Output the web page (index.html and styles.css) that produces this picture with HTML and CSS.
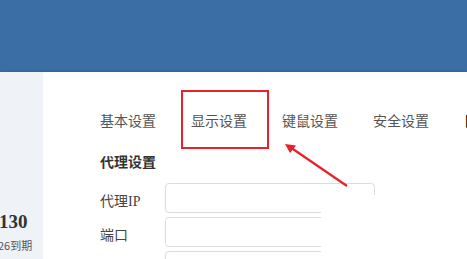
FILE: index.html
```html
<!DOCTYPE html>
<html lang="zh-CN">
<head>
<meta charset="utf-8">
<link rel="stylesheet" href="styles.css">
</head>
<body>
<div class="page">
  <header class="header"></header>
  <div class="content">
    <aside class="sidebar">
      <div class="stat-num">130</div>
      <div class="stat-date">26到期</div>
    </aside>
    <main class="main">
      <nav class="tabs">
        <span class="tab">基本设置</span>
        <span class="tab">显示设置</span>
        <span class="tab">键鼠设置</span>
        <span class="tab">安全设置</span>
        <span class="tab tab-dark">日志设置</span>
      </nav>
      <div class="section-title">代理设置</div>
      <div class="form">
        <div class="row"><label class="label">代理IP</label><div class="input"></div></div>
        <div class="row"><label class="label">端口</label><div class="input"></div></div>
        <div class="row"><label class="label"></label><div class="input"></div></div>
      </div>
    </main>
  </div>
  <div class="mask"></div>
  <div class="highlight"></div>
  <svg class="arrow" width="467" height="259" viewBox="0 0 467 259">
    <line x1="347" y1="186" x2="290" y2="147" stroke="#e8212b" stroke-width="2.2"/>
    <polygon points="285,144 296,145.5 290,153" fill="#e8212b"/>
  </svg>
</div>
</body>
</html>
```
FILE: styles.css
```css
html, body {
  margin: 0;
  padding: 0;
  background: #fff;
  overflow: hidden;
}
.page {
  position: relative;
  width: 467px;
  height: 259px;
  overflow: hidden;
  font-family: "Liberation Serif", "Noto Sans CJK SC", serif;
}
.header {
  height: 72px;
  background: #3b6ea5;
  box-shadow: inset 0 -2px 1px rgba(0, 0, 0, 0.06);
}
.content {
  display: flex;
  height: 187px;
}
.sidebar {
  width: 43px;
  flex: none;
  background: #eff2f7;
  padding-top: 139px;
  box-sizing: border-box;
  overflow: hidden;
}
.stat-num {
  margin-left: -1px;
  font-weight: bold;
  font-size: 19px;
  line-height: 22px;
  color: #333;
  white-space: nowrap;
}
.stat-date {
  margin-left: -2px;
  margin-top: 5px;
  font-size: 11px;
  line-height: 14px;
  color: #555;
  white-space: nowrap;
  font-family: "Noto Sans CJK SC", sans-serif;
}
.main {
  flex: 1;
  padding-left: 57px;
  padding-top: 40px;
  min-width: 0;
}
.tabs {
  display: flex;
  gap: 35px;
  white-space: nowrap;
  font-size: 14px;
  line-height: 20px;
  color: #555;
}
.tab {
  flex: none;
}
.tab-dark {
  color: #000;
  font-weight: bold;
}
.section-title {
  margin-top: 21px;
  font-size: 14px;
  line-height: 20px;
  font-weight: bold;
  color: #333;
}
.form {
  margin-top: 10px;
  display: flex;
  flex-direction: column;
  gap: 4px;
}
.row {
  display: flex;
  align-items: center;
}
.label {
  width: 65px;
  flex: none;
  font-size: 14px;
  color: #444;
  padding-top: 3px;
}
.input {
  width: 210px;
  height: 30px;
  box-sizing: border-box;
  border: 1px solid #dcdcdc;
  border-radius: 4px;
  flex: none;
}
.mask {
  position: absolute;
  left: 321px;
  top: 195px;
  right: 0;
  bottom: 0;
  background: #fff;
}
.highlight {
  position: absolute;
  left: 181px;
  top: 90px;
  width: 88px;
  height: 59px;
  box-sizing: border-box;
  border: 2px solid #e8212b;
}
.arrow {
  position: absolute;
  left: 0;
  top: 0;
}
```
